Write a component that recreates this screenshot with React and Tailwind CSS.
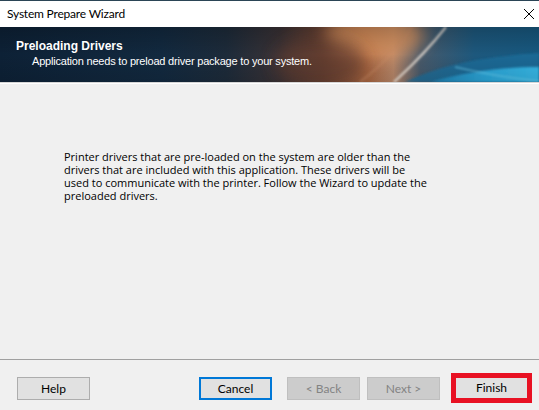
import React from "react";

function BannerArt() {
  return (
    <svg
      className="absolute inset-0 h-full w-full"
      viewBox="0 0 539 55"
      preserveAspectRatio="none"
    >
      <defs>
        <linearGradient id="base" x1="0" y1="0" x2="1" y2="0">
          <stop offset="0" stopColor="#0d2136" />
          <stop offset="0.3" stopColor="#12293f" />
          <stop offset="0.42" stopColor="#1d2b3a" />
          <stop offset="0.52" stopColor="#3a3235" />
          <stop offset="0.6" stopColor="#6a4233" />
          <stop offset="0.68" stopColor="#a86540" />
          <stop offset="0.73" stopColor="#b58568" />
          <stop offset="0.78" stopColor="#47596a" />
          <stop offset="0.88" stopColor="#1d587d" />
          <stop offset="1" stopColor="#17587f" />
        </linearGradient>
        <linearGradient id="shade" x1="0" y1="0" x2="0" y2="1">
          <stop offset="0" stopColor="#000" stopOpacity="0.2" />
          <stop offset="0.5" stopColor="#000" stopOpacity="0" />
          <stop offset="1" stopColor="#000" stopOpacity="0.1" />
        </linearGradient>
        <linearGradient id="cyan" x1="0" y1="0" x2="1" y2="0">
          <stop offset="0" stopColor="#1f7fb0" />
          <stop offset="0.5" stopColor="#2ba4d6" />
          <stop offset="1" stopColor="#36b6e4" />
        </linearGradient>
        <filter id="soft" x="-50%" y="-50%" width="200%" height="200%">
          <feGaussianBlur stdDeviation="8" />
        </filter>
        <filter id="thin" x="-20%" y="-20%" width="140%" height="140%">
          <feGaussianBlur stdDeviation="0.8" />
        </filter>
      </defs>
      <rect width="539" height="55" fill="url(#base)" />
      {/* warm glow behind the swoosh */}
      <ellipse cx="375" cy="8" rx="50" ry="22" fill="#de9660" opacity="0.75" filter="url(#soft)" />
      <ellipse cx="320" cy="35" rx="45" ry="25" fill="#5e3a2e" opacity="0.6" filter="url(#soft)" />
      {/* lower blue sweep */}
      <path d="M405 55 C440 38 480 30 539 26 L539 55 Z" fill="#1e6d9a" opacity="0.8" filter="url(#thin)" />
      <path d="M430 55 C470 44 505 40 539 40 L539 55 Z" fill="url(#cyan)" filter="url(#thin)" />
      <path d="M455 40 C490 48 515 52 539 54" stroke="#6fd0f0" strokeWidth="1.5" fill="none" opacity="0.6" filter="url(#thin)" />
      {/* pale diagonal streak */}
      <path d="M394 55 C408 42 422 30 446 0" stroke="#ece2d8" strokeWidth="2.5" fill="none" opacity="0.8" filter="url(#thin)" />
      <path d="M360 55 C380 40 395 25 412 0" stroke="#c98c66" strokeWidth="3" fill="none" opacity="0.35" filter="url(#thin)" />
      <rect width="539" height="55" fill="url(#shade)" />
    </svg>
  );
}

function WinButton({ children, variant = "normal" }) {
  const base =
    "flex h-[23px] w-[73px] items-center justify-center text-[12px] leading-none";
  if (variant === "default") {
    return (
      <div className={`${base} border-2 border-[#0078d7] bg-[#e1e1e1] text-black`}>
        {children}
      </div>
    );
  }
  if (variant === "disabled") {
    return (
      <div className={`${base} border border-[#bfbfbf] bg-[#cccccc] text-[#838383]`}>
        {children}
      </div>
    );
  }
  return (
    <div className={`${base} border border-[#adadad] bg-[#e1e1e1] text-black`}>
      {children}
    </div>
  );
}

export default function App() {
  return (
    <div className="flex h-[410px] w-[539px] flex-col overflow-hidden border-t border-[#2b4556] bg-[#f0f0f0] font-['Lato',sans-serif]">
      {/* title bar */}
      <div className="flex h-[26px] items-center justify-between bg-white pl-[7px] pr-[4px]">
        <span className="text-[12px] tracking-[-0.2px] text-black">System Prepare Wizard</span>
        <svg width="12" height="12" viewBox="0 0 12 12">
          <path d="M1 1 L11 11 M11 1 L1 11" stroke="#000" strokeWidth="1" fill="none" />
        </svg>
      </div>

      {/* header banner */}
      <div className="relative h-[55px] shrink-0 font-['Liberation_Sans',sans-serif] text-white">
        <BannerArt />
        <div className="relative flex flex-col pl-[16px] pt-[11px]">
          <span className="text-[12px] font-bold leading-[16px]">Preloading Drivers</span>
          <span className="pl-[16px] text-[11px] leading-[15px] tracking-[-0.2px]">
            Application needs to preload driver package to your system.
          </span>
        </div>
      </div>
      <div className="h-[2px] border-t border-[#d6d6d6] bg-white" />

      {/* body */}
      <div className="h-[275px] shrink-0 pl-[64px] pt-[66px] font-['Open_Sans',sans-serif] text-[11px] leading-[13px] text-black">
        <p>
          Printer drivers that are pre-loaded on the system are older than the
          <br />
          drivers that are included with this application. These drivers will be
          <br />
          used to communicate with the printer. Follow the Wizard to update the
          <br />
          preloaded drivers.
        </p>
      </div>

      {/* footer */}
      <div className="border-t border-[#a0a0a0]" />
      <div className="flex flex-1 items-start pt-[17px]">
        <div className="ml-[17px]">
          <WinButton>Help</WinButton>
        </div>
        <div className="ml-[109px]">
          <WinButton variant="default">Cancel</WinButton>
        </div>
        <div className="ml-[15px]">
          <WinButton variant="disabled">&lt; Back</WinButton>
        </div>
        <div className="ml-[7px]">
          <WinButton variant="disabled">Next &gt;</WinButton>
        </div>
        <div className="ml-[11px] mt-[-4px] flex h-[30px] w-[81px] items-center justify-center border-[5px] border-[#e81123] bg-[#e1e1e1] text-[12px] text-black">
          Finish
        </div>
      </div>
    </div>
  );
}
